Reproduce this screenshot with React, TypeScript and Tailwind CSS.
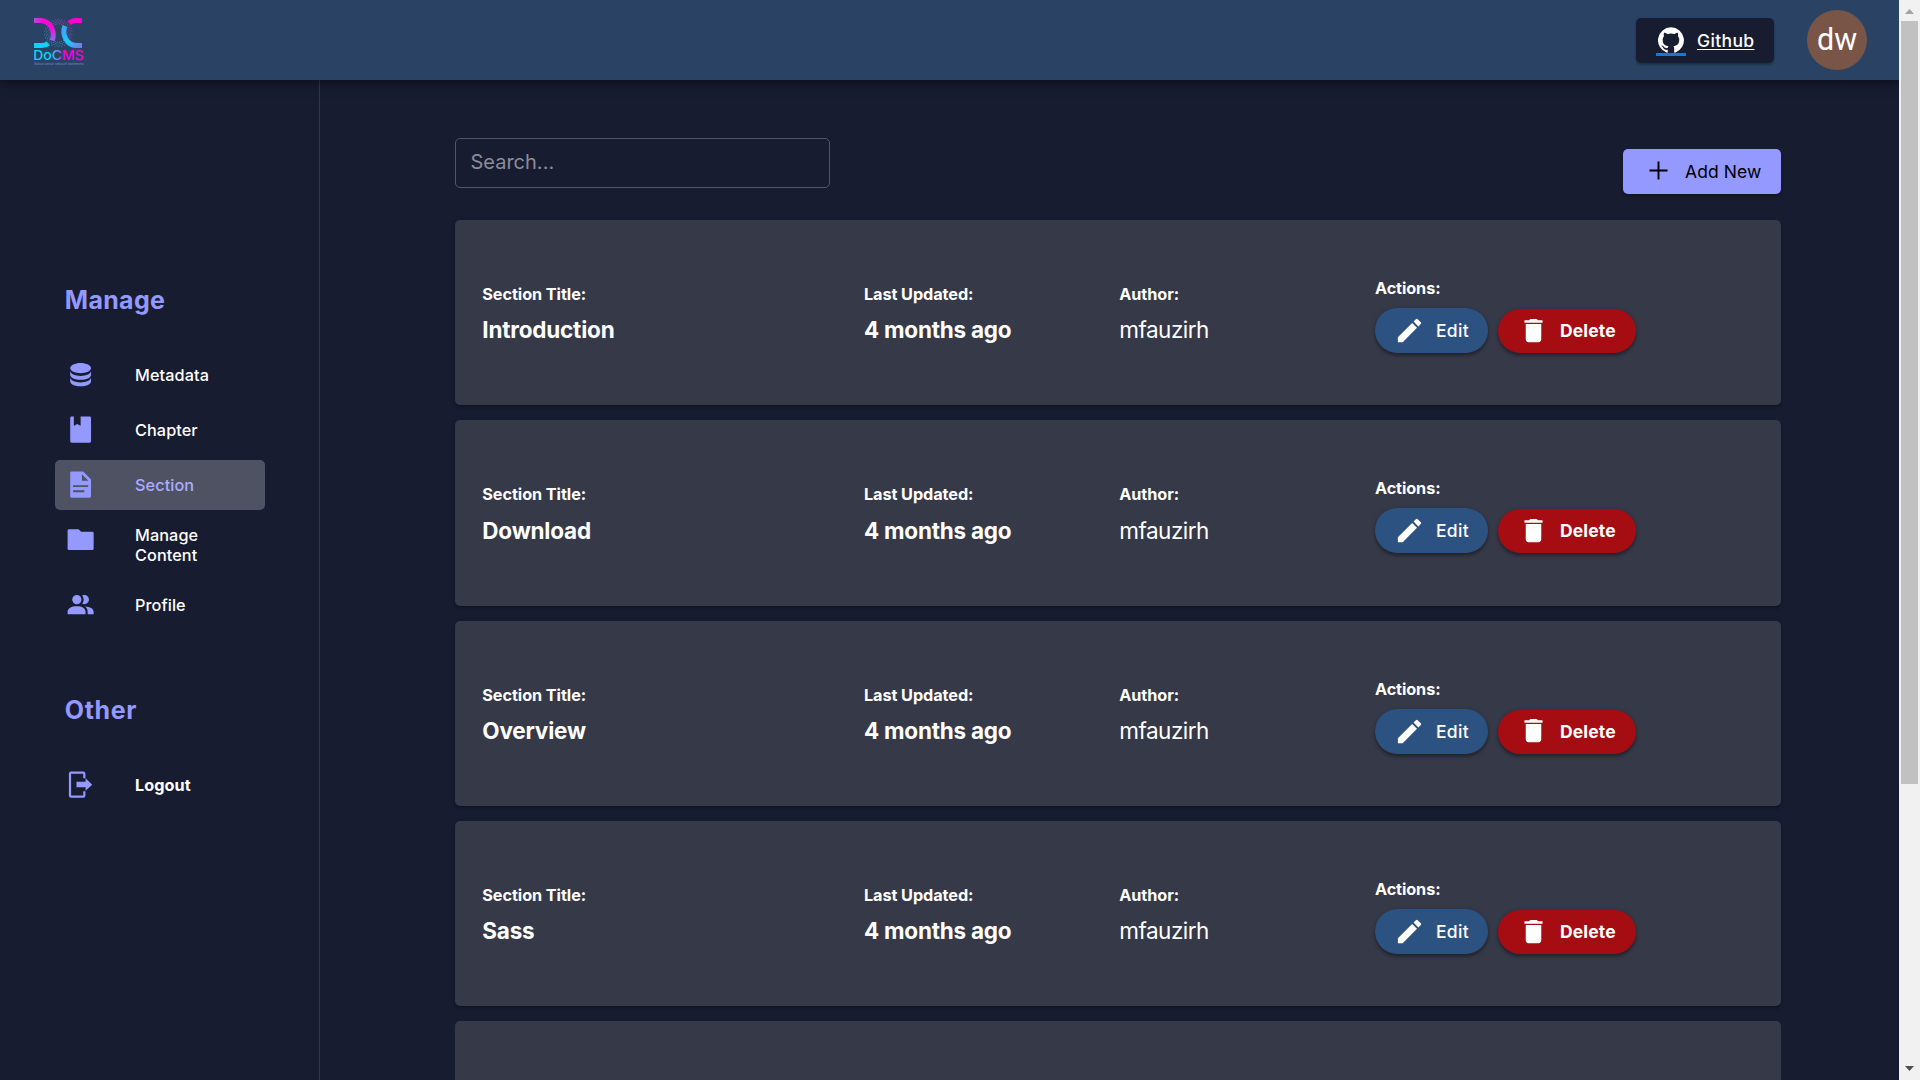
import type { ReactNode } from "react";

const sections = ["Introduction", "Download", "Overview", "Sass"];

function Icon({ d, className = "size-[31.25px]" }: { d: string; className?: string }) {
  return (
    <svg viewBox="0 0 24 24" fill="currentColor" className={`shrink-0 ${className}`}>
      <path fillRule="evenodd" d={d} />
    </svg>
  );
}

const icons = {
  database:
    "M12 3C7.58 3 4 4.79 4 7s3.58 4 8 4s8-1.79 8-4s-3.58-4-8-4M4 9v3c0 2.21 3.58 4 8 4s8-1.79 8-4V9c0 2.21-3.58 4-8 4s-8-1.79-8-4m0 5v3c0 2.21 3.58 4 8 4s8-1.79 8-4v-3c0 2.21-3.58 4-8 4s-8-1.79-8-4",
  book: "M5.1 2H6.8V9L9.4 7.7L12 9V2H18.9Q20 2 20 3.1V20.9Q20 22 18.9 22H5.1Q4 22 4 20.9V3.1Q4 2 5.1 2Z",
  article:
    "M5 2H14L20 8V21Q20 22 19 22H5Q4 22 4 21V3Q4 2 5 2ZM13 4V9H18ZM6.2 12.4V13.9H17.8V12.4ZM6.2 16.4V17.9H14.8V16.4Z",
  folder: "M3 4H10.4L12.4 6H21Q22 6 22 7V19Q22 20 21 20H3Q2 20 2 19V5Q2 4 3 4Z",
  people:
    "M9.1 4.6a3.55 3.55 0 1 1 0 7.1a3.55 3.55 0 1 1 0-7.1M13.2 11.4c1.5-1.9 1.5-4.7 0-6.5c2.5-1.1 5.2.6 5.2 3.25s-2.7 4.35-5.2 3.25M2 19.3v-1.5c0-3 3-4.5 7.1-4.5s6.7 1.5 6.7 4.5v1.5zM17.4 19.3v-1.6c0-1.8-.7-3.2-2.1-4.2c3.9.2 6.7 1.6 6.7 4.3v1.5z",
  logout:
    "M4.7 2H14Q15.7 2 15.7 3.7V7.1H14V3.7H4.7V20.3H14V17H15.7V20.3Q15.7 22 14 22H4.7Q3 22 3 20.3V3.7Q3 2 4.7 2ZM8.8 9.8H15.8V7.1L20.9 12L15.8 16.7V14H8.8Z",
  edit: "M3 17.25V21h3.75L17.81 9.94l-3.75-3.75zM20.71 7.04a.996.996 0 0 0 0-1.41l-2.34-2.34a.996.996 0 0 0-1.41 0l-1.83 1.83l3.75 3.75z",
  trash: "M6 19c0 1.1.9 2 2 2h8c1.1 0 2-.9 2-2V7H6zM19 4h-3.5l-1-1h-5l-1 1H5v2h14z",
  add: "M19 12.75h-6.25V19h-1.5v-6.25H5v-1.5h6.25V5h1.5v6.25H19z",
  github:
    "M12 .3a12 12 0 0 0-3.8 23.38c.6.12.83-.26.83-.57L9 21.07c-3.34.72-4.04-1.61-4.04-1.61c-.55-1.39-1.34-1.76-1.34-1.76c-1.08-.74.09-.73.09-.73c1.2.09 1.83 1.24 1.83 1.24c1.08 1.83 2.81 1.3 3.5 1c.1-.78.42-1.31.76-1.61c-2.67-.3-5.47-1.33-5.47-5.93c0-1.31.47-2.38 1.24-3.22c-.14-.3-.54-1.52.1-3.18c0 0 1-.32 3.3 1.23a11.5 11.5 0 0 1 6 0c2.28-1.55 3.29-1.23 3.29-1.23c.64 1.66.24 2.88.12 3.18a4.65 4.65 0 0 1 1.23 3.22c0 4.61-2.8 5.63-5.48 5.92c.42.36.81 1.1.81 2.22l-.01 3.29c0 .31.2.69.82.57A12 12 0 0 0 12 .3",
};

function Logo() {
  const dots: ReactNode[] = [];
  for (let ring = 0; ring < 4; ring++) {
    const count = 26;
    for (let i = 0; i < count; i++) {
      const a = ((i + (ring % 2) / 2) / count) * Math.PI * 2;
      const r = 9.2 + ring * 1.5;
      dots.push(<circle key={`${ring}-${i}`} cx={24.3 + Math.cos(a) * r} cy={15 + Math.sin(a) * r} r={0.55} />);
    }
  }
  return (
    <svg viewBox="0 0 50 48" className="h-12 w-[50px]">
      <defs>
        <radialGradient id="topArc" gradientUnits="userSpaceOnUse" cx="15" cy="4" r="19">
          <stop offset=".35" stopColor="#f40ad6" />
          <stop offset=".95" stopColor="#8f68ea" />
        </radialGradient>
        <linearGradient id="rightArc" gradientUnits="userSpaceOnUse" x1="28" y1="12" x2="48" y2="30">
          <stop offset="0" stopColor="#3ea4f4" />
          <stop offset=".45" stopColor="#1fc8fb" />
          <stop offset="1" stopColor="#8270ea" />
        </linearGradient>
        <linearGradient id="dotFade" gradientUnits="userSpaceOnUse" x1="12" y1="28" x2="36" y2="4">
          <stop offset="0" stopColor="#19a9d6" />
          <stop offset=".5" stopColor="#5b70b8" />
          <stop offset="1" stopColor="#d01fc4" />
        </linearGradient>
        <linearGradient id="wordmark" gradientUnits="userSpaceOnUse" x1="0" y1="0" x2="49" y2="0">
          <stop offset=".35" stopColor="#06dcfd" />
          <stop offset=".5" stopColor="#8a78ee" />
          <stop offset=".62" stopColor="#f903d4" />
        </linearGradient>
      </defs>
      <g fill="url(#dotFade)" opacity=".9">{dots}</g>
      <path d="M0 2.5H7C16 3 21.500 13 18.300 22.500" fill="none" stroke="url(#topArc)" strokeWidth="5" />
      <path d="M0 27.500H8Q12 27.500 14.300 25.400" fill="none" stroke="#0bd3fa" strokeWidth="5" />
      <path d="M48 2.500H42Q38 2.500 35 5" fill="none" stroke="#fb00d4" strokeWidth="5" />
      <path d="M30.900 8C27.500 17 33 27 42 27.500H48" fill="none" stroke="url(#rightArc)" strokeWidth="5" />
      <text x="-0.8" y="42" textLength="50.500" lengthAdjust="spacingAndGlyphs" fontSize="13.400" fontWeight="500" fontFamily="Inter, sans-serif" fill="url(#wordmark)">
        DoCMS
      </text>
      <text x="0" y="46.800" textLength="50" lengthAdjust="spacingAndGlyphs" fontSize="3.300" fontFamily="Inter, sans-serif" fill="#7f86dc">
        Solusi untuk seluruh kontenmu
      </text>
    </svg>
  );
}

function NavItem({ icon, label, active, bold }: { icon: string; label: string; active?: boolean; bold?: boolean }) {
  return (
    <div className={`flex min-h-[50px] w-[210px] items-start rounded-[5px] py-[5px] pl-[10px] ${active ? "bg-[#4f5262]" : ""}`}>
      <span className="w-[70px] pt-[4.400px] text-[#9399ff]">
        <Icon d={icon} />
      </span>
      <span
        className={`flex min-h-10 w-[90px] items-center text-[16.25px] leading-5 ${bold ? "font-bold tracking-[0.05px]" : "font-medium tracking-[0.08px]"} ${active ? "text-[#a9adff]" : "text-white"}`}
      >
        {label}
      </span>
    </div>
  );
}

function Field({ label, children }: { label: string; children: ReactNode }) {
  return (
    <div className="pt-[62px]">
      <div className="text-[16.25px] leading-[25px] font-bold tracking-[-0.08px]">{label}</div>
      {children}
    </div>
  );
}

function SectionCard({ title }: { title: string }) {
  return (
    <article className="grid h-[185.300px] shrink-0 grid-cols-[381.700px_255.300px_255.700px_1fr] rounded-[5px] bg-[#363948] pl-[27.300px] text-white shadow-[0_2px_2px_rgba(0,0,0,0.2),0_1px_4px_rgba(0,0,0,0.15)]">
      <Field label="Section Title:">
        <div className="mt-[6.400px] text-[22.5px] leading-[34px] font-bold tracking-[-0.2px]">{title}</div>
      </Field>
      <Field label="Last Updated:">
        <div className="mt-[6.400px] text-[22.5px] leading-[34px] font-bold tracking-[-0.23px]">4 months ago</div>
      </Field>
      <Field label="Author:">
        <div className="mt-[6.400px] text-[22.5px] leading-[34px] tracking-[-0.5px]">mfauzirh</div>
      </Field>
      <div className="pt-[56px]">
        <div className="text-[16.25px] leading-[25px] font-bold tracking-[-0.1px]">Actions:</div>
        <div className="mt-[7.200px] flex items-end gap-[10px]">
          <button className="flex h-[45px] w-[113px] items-center rounded-full bg-[#2c5282] pl-[19px] text-[17.5px] font-medium tracking-[0.3px] shadow-[0_3px_3px_rgba(0,0,0,0.25),0_1px_5px_rgba(0,0,0,0.2)]">
            <Icon d={icons.edit} className="size-[31px]" />
            <span className="mt-px ml-[11px]">Edit</span>
          </button>
          <button className="flex h-[44px] w-[138px] items-center rounded-full bg-[#a60d13] pl-[20px] text-[17.5px] font-bold tracking-[0.15px] shadow-[0_3px_3px_rgba(0,0,0,0.25),0_1px_5px_rgba(0,0,0,0.2)]">
            <Icon d={icons.trash} className="mb-[2px] size-[31px]" />
            <span className="ml-[11px]">Delete</span>
          </button>
        </div>
      </div>
    </article>
  );
}

function Scrollbar() {
  return (
    <div className="z-20 flex h-full w-[21px] shrink-0 flex-col items-center bg-[#f1f1f1]">
      <svg viewBox="0 0 21 21" className="h-[21px] w-[21px] shrink-0">
        <path d="M10.500 9L15 14H6Z" fill="#a3a3a3" />
      </svg>
      <div className="h-[763px] w-[17px] bg-[#c1c1c1]" />
      <svg viewBox="0 0 21 21" className="mt-auto h-[21px] w-[21px] shrink-0">
        <path d="M10.500 12L15 7H6Z" fill="#505050" />
      </svg>
    </div>
  );
}

export default function App() {
  return (
    <div className="flex h-[1080px] w-[1920px] overflow-hidden bg-[#181c30] font-['Inter',sans-serif]">
      <div className="flex min-w-0 flex-1 flex-col">
        <header className="z-10 flex h-20 shrink-0 items-center bg-[#2a4365] pr-8 pl-[34px] shadow-[0_2px_5px_rgba(0,0,0,0.3),0_5px_12px_rgba(0,0,0,0.22)]">
          <div className="pt-[4px]">
            <Logo />
          </div>
          <a className="ml-auto flex h-[45px] w-[138px] items-center rounded-[5px] bg-[#181c30] pl-5 text-[17.5px] font-medium tracking-[0.35px] text-white shadow-[0_2px_3px_rgba(0,0,0,0.3)]">
            <span className="mt-[2px] flex h-[29px] w-[30px] flex-col items-center border-b-3 border-[#1976d2]">
              <Icon d={icons.github} className="size-[26px]" />
            </span>
            <span className="mt-px ml-[11px] h-[18px] border-b border-[#1976d2] leading-[18px] underline decoration-white decoration-1 underline-offset-[2px]">
              Github
            </span>
          </a>
          <div className="ml-[33px] flex size-[60px] items-center justify-center rounded-full bg-[#795548] font-['Roboto',sans-serif] text-[30.500px] leading-none text-white">
            dw
          </div>
        </header>
        <div className="flex min-h-0 flex-1">
          <aside className="w-[320px] shrink-0 border-r border-[#343749] pt-[200px] pl-[55px]">
            <h2 className="pl-[9.800px] text-[25px] leading-10 font-bold tracking-[0.3px] text-[#9399ff]">Manage</h2>
            <nav className="mt-[30px] flex flex-col gap-[5px]">
              <NavItem icon={icons.database} label="Metadata" />
              <NavItem icon={icons.book} label="Chapter" />
              <NavItem icon={icons.article} label="Section" active />
              <div className="flex h-[60px] w-[210px] pl-[10px]">
                <span className="w-[70px] pt-[9.400px] text-[#9399ff]">
                  <Icon d={icons.folder} />
                </span>
                <span className="flex w-[90px] items-center text-[16.25px] leading-5 font-medium tracking-[0.08px] text-white">
                  Manage Content
                </span>
              </div>
              <NavItem icon={icons.people} label="Profile" />
            </nav>
            <h2 className="mt-[60px] pl-[9.800px] text-[25px] leading-10 font-bold tracking-[0.6px] text-[#9399ff]">Other</h2>
            <nav className="mt-[30px]">
              <NavItem icon={icons.logout} label="Logout" bold />
            </nav>
          </aside>
          <main className="flex min-w-0 flex-1 flex-col pr-[118px] pl-[135px]">
            <div className="flex h-[140px] shrink-0 items-start justify-between">
              <input
                placeholder="Search..."
                className="mt-[58px] h-[50px] w-[375px] rounded-[5px] border border-[#545663] bg-transparent px-[14.500px] pb-[3px] text-[20px] text-white placeholder:text-[#8b8d98] placeholder:opacity-100"
              />
              <button className="mt-[69px] flex h-[45px] w-[158px] items-center rounded-[5px] bg-[#9399ff] pl-5 text-[17.5px] tracking-[0.1px] text-black shadow-[0_2px_3px_rgba(0,0,0,0.3)]">
                <Icon d={icons.add} className="mb-[2px] size-[31px]" />
                <span className="mt-px ml-[11px]">Add New</span>
              </button>
            </div>
            <div className="flex flex-col gap-[15px]">
              {sections.map((s) => (
                <SectionCard key={s} title={s} />
              ))}
              <div className="h-[185.300px] shrink-0 rounded-[5px] bg-[#363948]" />
            </div>
          </main>
        </div>
      </div>
      <Scrollbar />
    </div>
  );
}
